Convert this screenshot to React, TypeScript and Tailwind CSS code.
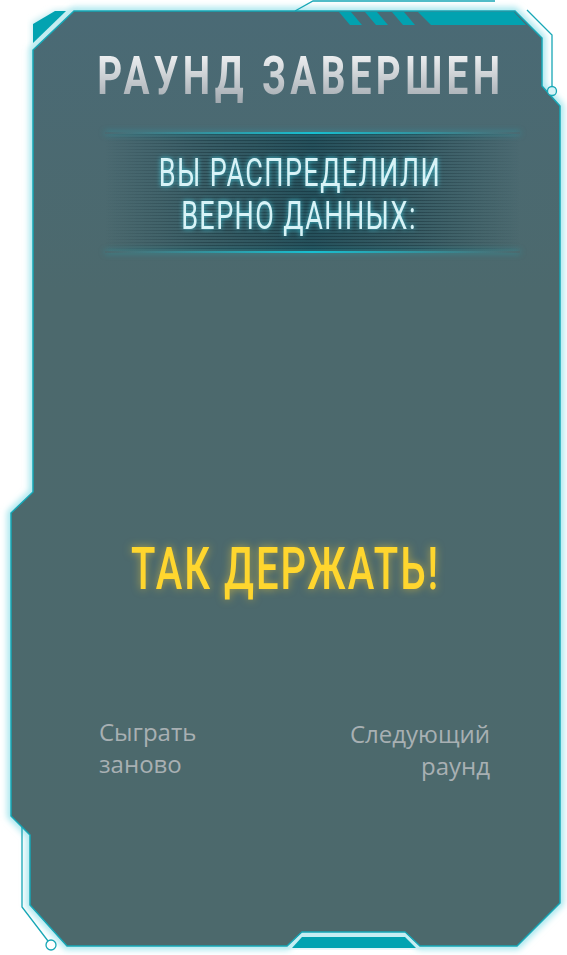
import React from 'react';

const BODY =
  '74,11 515,11 542,38 542,86 560,106 560,903 517,946 420,946 405,932 302,932 287,946 67,946 30,905 30,835 11,816 11,513 33,492 33,50';

function Frame() {
  return (
    <svg className="absolute inset-0" width="567" height="955" viewBox="0 0 567 955">
      <defs>
        <filter id="glow" x="-10%" y="-10%" width="120%" height="120%">
          <feGaussianBlur stdDeviation="3" />
        </filter>
        <linearGradient id="bodyFill" x1="0" y1="0" x2="0" y2="1">
          <stop offset="0" stopColor="#4a6a75" />
          <stop offset="0.3" stopColor="#4c696d" />
          <stop offset="1" stopColor="#4c696c" />
        </linearGradient>
      </defs>

      {/* outer glow */}
      <polygon points={BODY} fill="none" stroke="#9fe4ec" strokeWidth="7" filter="url(#glow)" />

      {/* thin circuit lines */}
      <g fill="none" stroke="#17a7b6" strokeWidth="1.3">
        <polyline points="295,11 313,1 495,1" />
        <polyline points="527,10 552,35 552,86" />
        <polyline points="22,827 22,907 48,941" />
      </g>

      {/* top-left corner piece */}
      <polygon points="32,22 55,10 77,10 32,53" fill="#c3ecf1" filter="url(#glow)" />
      <polygon points="33,24 55,11 66,11 33,43" fill="#02a3b1" />

      {/* bottom tab */}
      <polygon points="284,948 301,930 406,930 423,948" fill="#bdeaf0" filter="url(#glow)" />

      {/* body */}
      <polygon points={BODY} fill="url(#bodyFill)" stroke="#16a6b5" strokeWidth="1.5" />

      {/* bottom tab fill */}
      <polygon points="288,947 302,933 405,933 419,947" fill="#c4eef3" />
      <polygon points="292,948 302,937 405,937 416,948" fill="#02a3b1" />

      {/* top bar stripes */}
      <g fill="#02a2b0">
        <polygon points="339,12 351,12 362,25 350,25" />
        <polygon points="365,12 377,12 388,25 376,25" />
        <polygon points="392,12 404,12 415,25 403,25" />
        <polygon points="418,12 514,12 526,25 431,25" />
      </g>

      {/* circles */}
      <circle cx="552" cy="91" r="4.5" fill="#d6f3f6" stroke="#17a7b6" strokeWidth="1.3" />
      <circle cx="51" cy="945" r="5" fill="#ffffff" stroke="#17a7b6" strokeWidth="1.3" />
    </svg>
  );
}

export default function App() {
  return (
    <div className="relative w-[567px] h-[955px] bg-white overflow-hidden">
      <Frame />

      <div className="relative flex flex-col pt-[50px]">
        {/* title */}
        <div className="pl-[46px] pr-[11px] flex justify-center">
          <h1 className="block whitespace-nowrap scale-x-[0.73] font-['Roboto',sans-serif] font-bold text-[53px] leading-[53px] tracking-[6px] bg-gradient-to-b from-[#f6f7f8] to-[#a1a9af] bg-clip-text text-transparent">
            РАУНД ЗАВЕРШЕН
          </h1>
        </div>

        {/* subtitle band */}
        <div className="relative ml-[105px] mt-[29px] w-[415px] h-[121px]">
          <div className="absolute inset-x-0 top-[2px] bottom-[2px] bg-gradient-to-r from-transparent via-[#1c4a56]/80 to-transparent" />
          <div className="absolute inset-x-0 top-[2px] bottom-[2px] bg-[repeating-linear-gradient(to_bottom,rgba(10,30,38,0.35)_0px,rgba(10,30,38,0.35)_1px,transparent_1px,transparent_3px)] [mask-image:linear-gradient(to_right,transparent,black_25%,black_75%,transparent)]" />
          <div className="absolute inset-x-0 top-0 h-[2px] bg-gradient-to-r from-transparent via-[#18bfd0] to-transparent shadow-[0_0_6px_rgba(24,191,208,0.6)]" />
          <div className="absolute inset-x-0 bottom-0 h-[2px] bg-gradient-to-r from-transparent via-[#18bfd0] to-transparent shadow-[0_0_6px_rgba(24,191,208,0.6)]" />
          <div className="relative flex flex-col items-center pt-[20px] pr-[26px] font-['Roboto',sans-serif] text-[38px] leading-[43px] tracking-[2px] text-[#d8f3f7] [text-shadow:0_0_6px_rgba(70,220,240,0.8)]">
            <span className="block whitespace-nowrap scale-x-[0.71]">ВЫ РАСПРЕДЕЛИЛИ</span>
            <span className="block whitespace-nowrap scale-x-[0.71]">ВЕРНО ДАННЫХ:</span>
          </div>
        </div>

        {/* result */}
        <div className="mt-[286px] flex justify-center pl-[4px]">
          <p className="block whitespace-nowrap scale-x-[0.667] font-['Roboto',sans-serif] font-medium text-[60px] leading-[60px] tracking-[3px] text-[#ffd62e] [text-shadow:0_0_10px_rgba(255,210,50,0.55)]">
            ТАК ДЕРЖАТЬ!
          </p>
        </div>

        {/* actions */}
        <div className="mt-[115px] flex justify-between pl-[99px] pr-[77px] font-['Open_Sans',sans-serif] text-[24px] leading-[32px] text-[#a8b0b3]">
          <button className="text-left">
            Сыграть
            <br />
            заново
          </button>
          <button className="text-right mt-[4px]">
            Следующий
            <br />
            раунд
          </button>
        </div>
      </div>
    </div>
  );
}
